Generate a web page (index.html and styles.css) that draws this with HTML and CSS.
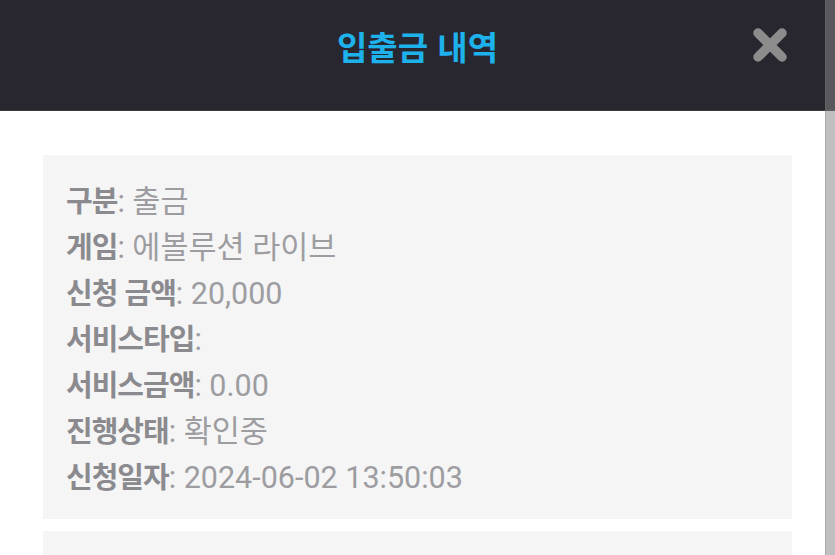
FILE: index.html
```html
<!DOCTYPE html>
<html lang="ko">
<head>
<meta charset="utf-8">
<link rel="stylesheet" href="styles.css">
</head>
<body>
<div class="page">
  <header class="header">
    <h1 class="title">입출금 내역</h1>
    <button class="close" aria-label="닫기">
      <svg width="36" height="36" viewBox="0 0 36 36"><path d="M6 6 L30 30 M30 6 L6 30" stroke="#8c8c8c" stroke-width="9.5" stroke-linecap="round" fill="none"/></svg>
    </button>
  </header>
  <main class="content">
    <section class="card">
      <div class="row"><span class="label">구분</span><span class="value">: 출금</span></div>
      <div class="row"><span class="label">게임</span><span class="value">: 에볼루션 라이브</span></div>
      <div class="row"><span class="label">신청 금액</span><span class="value">: 20,000</span></div>
      <div class="row"><span class="label">서비스타입</span><span class="value">:</span></div>
      <div class="row"><span class="label">서비스금액</span><span class="value">: 0.00</span></div>
      <div class="row"><span class="label">진행상태</span><span class="value">: 확인중</span></div>
      <div class="row"><span class="label">신청일자</span><span class="value">: 2024-06-02 13:50:03</span></div>
    </section>
    <section class="card card-empty"></section>
  </main>
</div>
<div class="scrollbar"></div>
</body>
</html>
```
FILE: styles.css
```css
html, body {
  margin: 0;
  padding: 0;
  height: 100%;
  overflow: hidden;
  background: #ffffff;
  font-family: Roboto, "Noto Sans CJK KR", sans-serif;
}
.page {
  display: flex;
  flex-direction: column;
  height: 100%;
}
.header {
  flex-shrink: 0;
  height: 111px;
  background: #282730;
  border-bottom: 1px solid #3a3a40;
  box-sizing: border-box;
  display: flex;
  align-items: center;
  justify-content: center;
  position: relative;
  padding-bottom: 18px;
}
.title {
  margin: 0;
  font-family: "Noto Sans CJK KR", sans-serif;
  font-weight: 700;
  font-size: 33px;
  line-height: 40px;
  color: #1db2ec;
}
.close {
  position: absolute;
  right: 47px;
  top: 27px;
  width: 36px;
  height: 36px;
  padding: 0;
  border: 0;
  background: transparent;
  display: block;
}
.close svg { display: block; }
.content {
  flex-shrink: 0;
  padding: 44px 43px 0 43px;
  display: flex;
  flex-direction: column;
  gap: 12px;
}
.card {
  background: #f5f5f5;
  padding: 21px 23px;
}
.card-empty {
  padding: 0;
  height: 25px;
}
.row {
  height: 46px;
  line-height: 46px;
  font-size: 28px;
  white-space: nowrap;
}
.label {
  font-family: "Noto Sans CJK KR", sans-serif;
  font-weight: 700;
  font-size: 29px;
  letter-spacing: -1px;
  color: #8b8b8f;
}
.value {
  font-family: Roboto, "Noto Sans CJK KR", sans-serif;
  font-weight: 400;
  font-size: 30.5px;
  color: #9d9da1;
}
.scrollbar {
  position: fixed;
  top: 0;
  right: 0;
  width: 9px;
  height: 100%;
  background: rgba(135, 135, 135, 0.53);
  border-left: 1px solid rgba(120, 120, 120, 0.3);
}
```
